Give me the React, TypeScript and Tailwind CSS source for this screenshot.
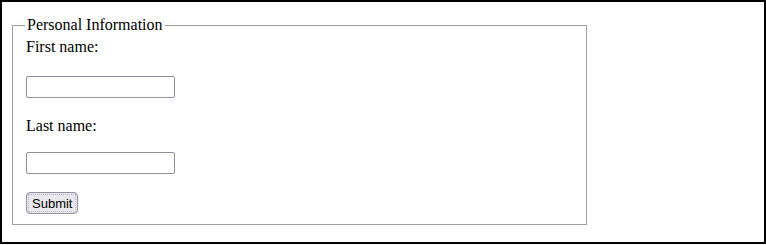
export default function App() {
  return (
    <div className="h-[244px] border-2 border-black bg-white px-[10px] pt-[14px] font-['Liberation_Serif',serif] text-[16px] text-black">
      <form onSubmit={(e) => e.preventDefault()}>
        <fieldset className="w-[575px] border border-[#a0a0a0] px-[13px] pb-[10px] shadow-[inset_1px_1px_0_#ffffff]">
          <legend className="-ml-px px-[2px] leading-[18px]">Personal Information</legend>
          <div className="flex flex-col items-start pt-1">
            <label htmlFor="fname" className="leading-[18px]">First name:</label>
            <input
              id="fname"
              type="text"
              className="mt-[20px] h-[22px] w-[149px] rounded-[2px] border border-[#8f8f9d] bg-white px-1 text-[13px] outline-none"
            />
            <label htmlFor="lname" className="mt-[19px] leading-[18px]">Last name:</label>
            <input
              id="lname"
              type="text"
              className="mt-[17px] h-[22px] w-[149px] rounded-[2px] border border-[#8f8f9d] bg-white px-1 text-[13px] outline-none"
            />
            <button
              type="submit"
              className="mt-[18px] flex h-[22px] items-center rounded-[4px] border border-[#8f8f9d] bg-[#e9e9ed] p-[1px] font-['Liberation_Sans',sans-serif] text-[13px] leading-none text-black"
            >
              <span className="flex h-full items-center border border-dotted border-[#b4b4bc] px-[3px]">Submit</span>
            </button>
          </div>
        </fieldset>
      </form>
    </div>
  )
}
